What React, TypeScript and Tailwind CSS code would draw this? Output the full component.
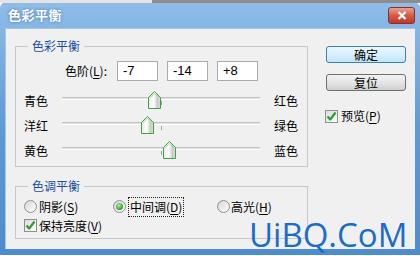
import React from "react";

const cjk = "font-['Noto_Sans_CJK_SC','Liberation_Sans',sans-serif]";

const sliders = [
  { left: "青色", right: "红色", value: -7 },
  { left: "洋红", right: "绿色", value: -14 },
  { left: "黄色", right: "蓝色", value: 8 },
];

function Key({ label, k }: { label: string; k: string }) {
  return (
    <span>
      {label}(<span className="underline underline-offset-2">{k}</span>)
    </span>
  );
}

function Check() {
  return (
    <span className="w-[13px] h-[13px] border border-[#8e8f8f] bg-gradient-to-br from-[#dcdcdc] to-[#ffffff] flex items-center justify-center shrink-0">
      <svg width="11" height="11" viewBox="0 0 11 11">
        <path d="M1.5 5.5 L4.2 8.5 L9.5 1.5" fill="none" stroke="#2f9e2f" strokeWidth="2.2" strokeLinejoin="round" />
      </svg>
    </span>
  );
}

function Radio({ on }: { on?: boolean }) {
  return (
    <span className="w-[13px] h-[13px] rounded-full border border-[#8e8f8f] bg-gradient-to-br from-[#d6d6d6] to-[#ffffff] flex items-center justify-center shrink-0">
      {on && <span className="w-[7px] h-[7px] rounded-full bg-[radial-gradient(circle_at_40%_35%,#b8f0a8,#3aa53a_60%,#21801f)]" />}
    </span>
  );
}

function Thumb() {
  return (
    <svg width="13" height="18" viewBox="0 0 13 18">
      <defs>
        <linearGradient id="tg" x1="0" x2="1" y1="0" y2="0">
          <stop offset="0" stopColor="#e8e8e8" />
          <stop offset="0.45" stopColor="#ffffff" />
          <stop offset="0.75" stopColor="#c9c9c9" />
          <stop offset="1" stopColor="#e0e0e0" />
        </linearGradient>
      </defs>
      <path d="M0.5 6.5 L6.5 0.5 L12.5 6.5 L12.5 17.5 L0.5 17.5 Z" fill="url(#tg)" stroke="#3da43d" strokeWidth="1" />
      <path d="M1.8 7 L6.5 2.2 L11.2 7" fill="none" stroke="#a6e29e" strokeWidth="1" />
    </svg>
  );
}

function Group({ title, className, children }: { title: string; className: string; children: React.ReactNode }) {
  return (
    <div className={`relative border border-[#c4c8cc] ${className}`}>
      <span className="absolute -top-[9px] left-[12px] px-[4px] bg-[#f0f0f0] text-[12px] leading-[16px] text-[#1b4ea2]">{title}</span>
      {children}
    </div>
  );
}

export default function App() {
  return (
    <div className={`w-[420px] h-[256px] overflow-hidden relative ${cjk} text-[12px] text-black`}>
      <div className="h-[3px] flex">
        <div className="w-[152px] bg-[#e4e4e4]" />
        <div className="flex-1 bg-[#8d8d8d]" />
      </div>
      <div className="h-[253px] -mt-[1px] rounded-t-[6px] bg-gradient-to-b from-[#8fbde8] via-[#5e9ad4] to-[#4f8ccb] flex flex-col px-[5px] pb-[6px]">
        <div className="h-[26px] flex items-center justify-between pl-[3px]">
          <span className="text-white font-bold text-[13px] tracking-[0.5px] [text-shadow:0_0_3px_#3b6fa8]">色彩平衡</span>
          <span className="w-[27px] h-[17px] rounded-[3px] border border-[#8b3024] bg-gradient-to-b from-[#e9a090] via-[#d45a45] to-[#c2352a] flex items-center justify-center">
            <svg width="10" height="9" viewBox="0 0 10 9">
              <path d="M1.5 1 L8.5 8 M8.5 1 L1.5 8" stroke="#ffffff" strokeWidth="2.2" />
            </svg>
          </span>
        </div>
        <div className="flex-1 bg-[#f0f0f0] border-t border-l border-[#a8c4e2] pl-[9px] pt-[17px] relative">
          <div className="flex">
            <Group title="色彩平衡" className="w-[293px] h-[121px] pt-[14px]">
              <div className="flex items-center h-[20px]">
                <span className="w-[101px] pr-[10px] text-right">
                  色阶(<span className="underline underline-offset-2">L</span>):
                </span>
                <div className="flex gap-[9px]">
                  {["-7", "-14", "+8"].map((v) => (
                    <div key={v} className="w-[41px] h-[20px] border border-[#a5acb5] bg-white flex items-center pl-[5px] font-['Liberation_Sans',sans-serif] text-[13px]">
                      {v}
                    </div>
                  ))}
                </div>
              </div>
              <div className="mt-[7px] flex flex-col pl-[8px]">
                {sliders.map((s) => (
                  <div key={s.left} className="h-[25px] flex items-center">
                    <span className="w-[38px] pt-[1px]">{s.left}</span>
                    <div className="relative w-[198px] h-[25px]">
                      <div className="absolute left-0 right-0 top-[9px] h-[3px] border-t border-[#c2c2c2] border-b border-b-[#ffffff] bg-[#e2e2e2]" />
                      <div className="absolute left-[99px] top-[13px] w-[1px] h-[4px] bg-[#9a9a9a]" />
                      <div className="absolute top-[3px]" style={{ left: 93 + s.value }}>
                        <Thumb />
                      </div>
                    </div>
                    <span className="ml-[14px] pt-[1px]">{s.right}</span>
                  </div>
                ))}
              </div>
            </Group>
            <div className="ml-[18px] w-[80px] flex flex-col">
              <button className="h-[17px] rounded-[3px] border border-[#3c7fb1] bg-gradient-to-b from-[#eaf6fd] via-[#d9f0fc] to-[#bee6fd] text-[12px] leading-none">确定</button>
              <button className="mt-[11px] h-[17px] rounded-[3px] border border-[#707070] bg-gradient-to-b from-[#f2f2f2] via-[#e5e5e5] to-[#cfcfcf] text-[12px] leading-none">复位</button>
              <div className="mt-[16px] flex items-center gap-[3px] -ml-[1px]">
                <Check />
                <Key label="预览" k="P" />
              </div>
            </div>
          </div>
          <Group title="色调平衡" className="mt-[19px] w-[293px] h-[53px] pt-[10px] pl-[8px]">
            <div className="h-[19px] flex items-center">
              <div className="w-[89px] flex items-center gap-[2px]">
                <Radio />
                <Key label="阴影" k="S" />
              </div>
              <div className="w-[104px] flex items-center gap-[2px]">
                <Radio on />
                <span className="outline-1 outline-dotted outline-[#222] px-[1px] ml-[1px]">
                  <Key label="中间调" k="D" />
                </span>
              </div>
              <div className="flex items-center gap-[1px]">
                <Radio />
                <Key label="高光" k="H" />
              </div>
            </div>
            <div className="h-[19px] flex items-center gap-[2px]">
              <Check />
              <Key label="保持亮度" k="V" />
            </div>
          </Group>
          <span className="absolute left-[243px] top-[192px] font-['Open_Sans',sans-serif] text-[33px] leading-[28px] text-[#1a6ccb]">UiBQ.CoM</span>
        </div>
      </div>
    </div>
  );
}
